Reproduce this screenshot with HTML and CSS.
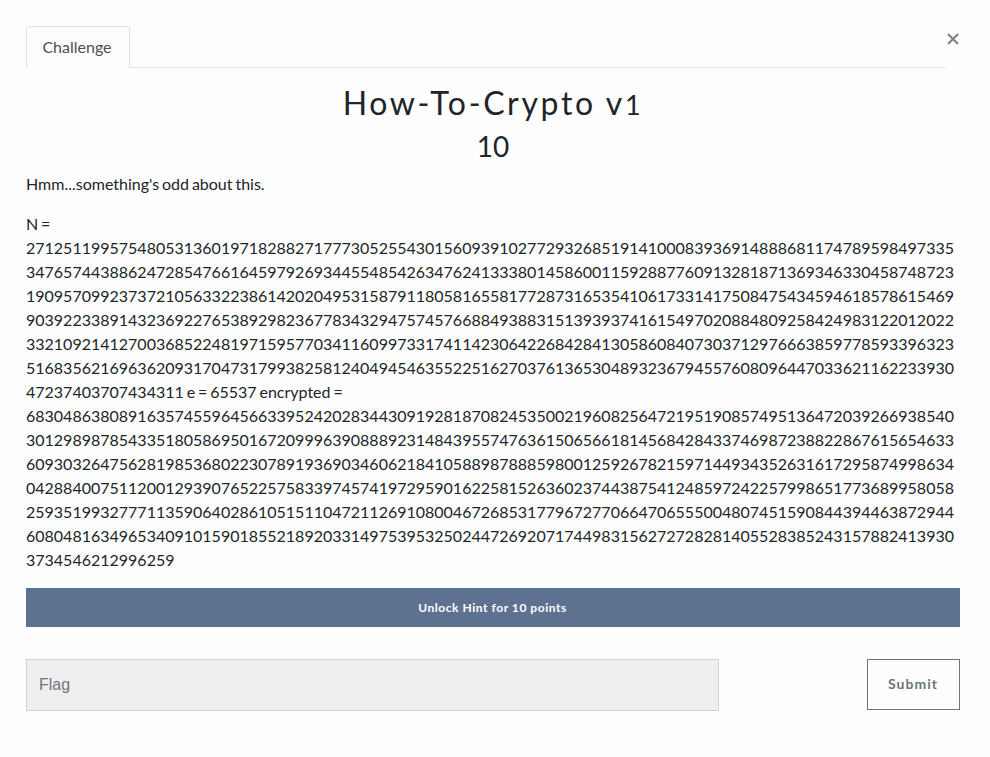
FILE: index.html
```
<!DOCTYPE html>
<html lang="en">
<head>
<meta charset="utf-8">
<title>How-To-Crypto v1</title>
<link rel="stylesheet" href="styles.css">
</head>
<body>
<main class="modal-body">
  <header class="top">
    <nav class="tabs"><a class="tab">Challenge</a></nav>
    <button class="close" type="button" aria-label="Close"><svg width="12" height="12" viewBox="0 0 12 12"><path d="M1 1 11 11M11 1 1 11"/></svg></button>
  </header>
  <h2 class="name">How-To-Crypto v<span class="oldstyle">1</span></h2>
  <h3 class="value">10</h3>
  <div class="description">
    <p>Hmm...something's odd about this.</p>
    <p>N =
    2712511995754805313601971828827177730525543015609391027729326851914100083936914888681174789598497335<wbr>3476574438862472854766164597926934455485426347624133380145860011592887760913281871369346330458748723<wbr>1909570992373721056332238614202049531587911805816558177287316535410617331417508475434594618578615469<wbr>9039223389143236922765389298236778343294757457668849388315139393741615497020884809258424983122012022<wbr>3321092141270036852248197159577034116099733174114230642268428413058608407303712976663859778593396323<wbr>5168356216963620931704731799382581240494546355225162703761365304893236794557608096447033621162233930<wbr>47237403707434311
    e = 65537
    encrypted =
    6830486380891635745596456633952420283443091928187082453500219608256472195190857495136472039266938540<wbr>3012989878543351805869501672099963908889231484395574763615065661814568428433746987238822867615654633<wbr>6093032647562819853680223078919369034606218410588987888598001259267821597144934352631617295874998634<wbr>0428840075112001293907652257583397457419729590162258152636023744387541248597242257998651773689958058<wbr>2593519932777113590640286105151104721126910800467268531779672770664706555004807451590844394463872944<wbr>6080481634965340910159018552189203314975395325024472692071744983156272728281405528385243157882413930<wbr>3734546212996259</p>
  </div>
  <button class="hint" type="button">Unlock Hint for 10 points</button>
  <form class="answer">
    <input class="flag" type="text" placeholder="Flag">
    <button class="submit" type="button">Submit</button>
  </form>
</main>
</body>
</html>
```
FILE: styles.css
```
* { box-sizing: border-box; }
body {
  margin: 0;
  background: #fefefe;
  color: #212529;
  font: 16px/24px Lato, sans-serif;
}
.modal-body { padding: 26px 30px 0 26px; }
.top { display: flex; align-items: flex-start; margin-bottom: 16px; }
.tabs { flex: 1; display: flex; height: 42px; border-bottom: 1px solid #dee2e6; }
.tab {
  width: 104px;
  height: 42px;
  padding: 8px 2px 8px 0;
  text-align: center;
  color: #495057;
  background: #fefefe;
  border: 1px solid #dee2e6;
  border-bottom-color: #fefefe;
  border-radius: 4px 4px 0 0;
}
.close {
  display: flex;
  justify-content: flex-start;
  width: 14px;
  padding: 7px 0 0 0.5px;
  border: 0;
  background: none;
}
.close svg { fill: none; stroke: #7f7f7f; stroke-width: 2; }
.name, .value { margin: 0 0 8px; font-weight: 400; text-align: center; }
.name { font-size: 32px; line-height: 38.4px; letter-spacing: 2.65px; }
.oldstyle { font-size: 27px; line-height: 1; }
.value { font-size: 28px; line-height: 33.6px; }
p { margin: 0 0 16px; word-spacing: -1.2px; }
.hint {
  display: block;
  width: 100%;
  height: 39px;
  padding: 0 1px 0 0;
  border: 0;
  background: #5d7290;
  color: #fff;
  font: 700 12px/18px Lato, sans-serif;
  letter-spacing: 0.55px;
}
.answer { display: flex; justify-content: space-between; align-items: flex-start; margin-top: 32px; }
.flag {
  width: 693px;
  height: 52px;
  padding: 0 12px;
  border: 1px solid #d0d1d9;
  border-radius: 0;
  background: #efefef;
  font: 16px/24px "Liberation Sans", sans-serif;
}
.flag::placeholder { color: #6c757d; opacity: 1; }
.submit {
  width: 93px;
  height: 51px;
  padding: 0 1px 2px 0;
  border: 1px solid #6c757d;
  background: transparent;
  color: #6c757d;
  font: 700 14px/21px Lato, sans-serif;
  letter-spacing: 1px;
}
```
